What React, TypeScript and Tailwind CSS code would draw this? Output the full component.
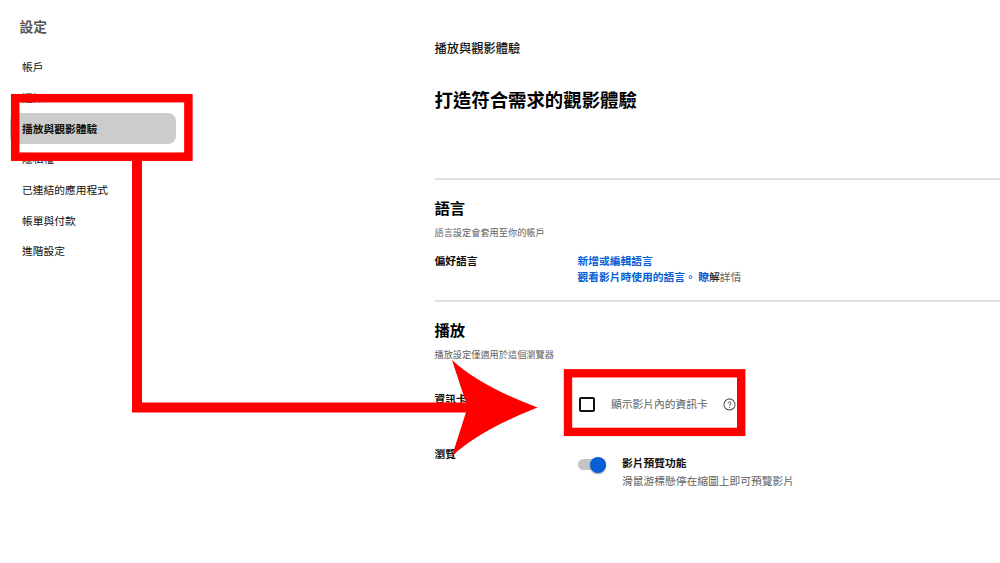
import { clsx } from 'clsx';

const NAV_ITEMS = [
  { label: '帳戶' },
  { label: '通知' },
  { label: '播放與觀影體驗', active: true },
  { label: '隱私權' },
  { label: '已連結的應用程式' },
  { label: '帳單與付款' },
  { label: '進階設定' },
];

function Sidebar() {
  return (
    <aside className="w-[434.5px] shrink-0">
      <h2 className="mt-4 ml-[19.5px] text-[13.7px] leading-5 font-bold text-[#555]">設定</h2>
      <nav className="mt-4 ml-2.5 w-[166px]">
        {NAV_ITEMS.map((item) => (
          <a
            key={item.label}
            className={clsx(
              'flex h-[30.7px] items-center rounded-lg pl-3 text-[10.75px] text-[#0f0f0f]',
              item.active && 'bg-[#cccccc] font-bold',
            )}
          >
            {item.label}
          </a>
        ))}
      </nav>
    </aside>
  );
}

function SectionTitle({ title, note }: { title: string; note: string }) {
  return (
    <>
      <h3 className="text-[15.3px] leading-6 font-bold text-black">{title}</h3>
      <p className="mt-[5px] text-[9.2px] leading-4 text-[#606060]">{note}</p>
    </>
  );
}

function HelpIcon() {
  return (
    <svg viewBox="0 0 24 24" className="ml-[15px] h-[13px] w-[13px] fill-[#444]">
      <path d="M15.36 9.96c0 1.09-.67 1.67-1.31 2.24-.53.47-1.03.9-1.16 1.6l-.04.2h-1.52l.04-.36c.15-1.18.94-1.85 1.58-2.4.54-.47.92-.8.92-1.28 0-1.08-.88-1.96-1.96-1.96s-1.96.88-1.96 1.96H8.5a3.43 3.43 0 0 1 6.86 0zM12 1c6.08 0 11 4.92 11 11s-4.92 11-11 11S1 18.08 1 12 5.92 1 12 1zm0 1.6a9.4 9.4 0 1 0 0 18.8 9.4 9.4 0 0 0 0-18.8zM11.1 16h1.8v1.8h-1.8z" />
    </svg>
  );
}

function Toggle() {
  return (
    <div className="relative mt-[5px] ml-[0.5px] h-[11px] w-[28px] rounded-full bg-[#c4c4c4]">
      <span className="absolute -top-[2.5px] right-0 h-4 w-4 rounded-full bg-[#065fd4] shadow-[0_1px_2px_rgba(0,0,0,0.4)]" />
    </div>
  );
}

function Annotations() {
  return (
    <svg viewBox="0 0 1000 563" className="pointer-events-none absolute inset-0 h-[563px] w-[1000px]">
      <g fill="none" stroke="#ff0000">
        <rect x="15.2" y="98.2" width="173.2" height="58.5" strokeWidth="8.5" />
        <path d="M137 160V407.5H470" strokeWidth="10" />
        <rect x="568" y="373.3" width="173.2" height="58.6" strokeWidth="8.4" />
      </g>
      <path d="M452 360Q480 386 537.5 407.5Q480 430 452 456L467.5 407.5Z" fill="#ff0000" />
    </svg>
  );
}

export default function App() {
  return (
    <div className="relative flex h-[563px] w-[1000px] overflow-hidden bg-white font-['Noto_Sans_CJK_TC','Noto_Sans',sans-serif] whitespace-nowrap">
      <Sidebar />

      <main className="min-w-0 flex-1">
        <header className="h-[180px] border-b-2 border-[#e0e0e0] pt-[39px]">
          <p className="text-[12.25px] leading-[18px] font-medium text-[#0f0f0f]">播放與觀影體驗</p>
          <h1 className="mt-7 text-[18.4px] leading-7 font-bold text-black">打造符合需求的觀影體驗</h1>
        </header>

        <section className="h-[122px] border-b-2 border-[#e0e0e0] pt-[15px]">
          <SectionTitle title="語言" note="語言設定會套用至你的帳戶" />
          <div className="mt-[13px] flex text-[10.75px] leading-[15.5px] font-bold">
            <span className="w-[143px] text-[#0f0f0f]">偏好語言</span>
            <div className="text-[#065fd4]">
              <p>新增或編輯語言</p>
              <p>
                觀看影片時使用的語言。 瞭<span className="font-medium text-[#222]">解</span>
                <span className="font-normal text-[#606060]">詳情</span>
              </p>
            </div>
          </div>
        </section>

        <section className="pt-[15px] text-[10.75px]">
          <SectionTitle title="播放" note="播放設定僅適用於這個瀏覽器" />
          <div className="mt-[29px] flex h-[55px] leading-4">
            <span className="w-[143px] font-bold text-[#0f0f0f]">資訊卡</span>
            <div className="mt-[5px] flex h-4 items-center">
              <span className="ml-[1.5px] h-[15px] w-4 rounded-[2px] border-2 border-[#111]" />
              <span className="ml-4 text-[#606060]">顯示影片內的資訊卡</span>
              <HelpIcon />
            </div>
          </div>
          <div className="flex">
            <span className="w-[143px] leading-4 font-bold text-[#0f0f0f]">瀏覽</span>
            <div className="mt-2 flex">
              <Toggle />
              <div className="ml-4 leading-[18px]">
                <p className="font-bold text-[#0f0f0f]">影片預覽功能</p>
                <p className="text-[#606060]">滑鼠游標懸停在縮圖上即可預覽影片</p>
              </div>
            </div>
          </div>
        </section>
      </main>

      <Annotations />
    </div>
  );
}
